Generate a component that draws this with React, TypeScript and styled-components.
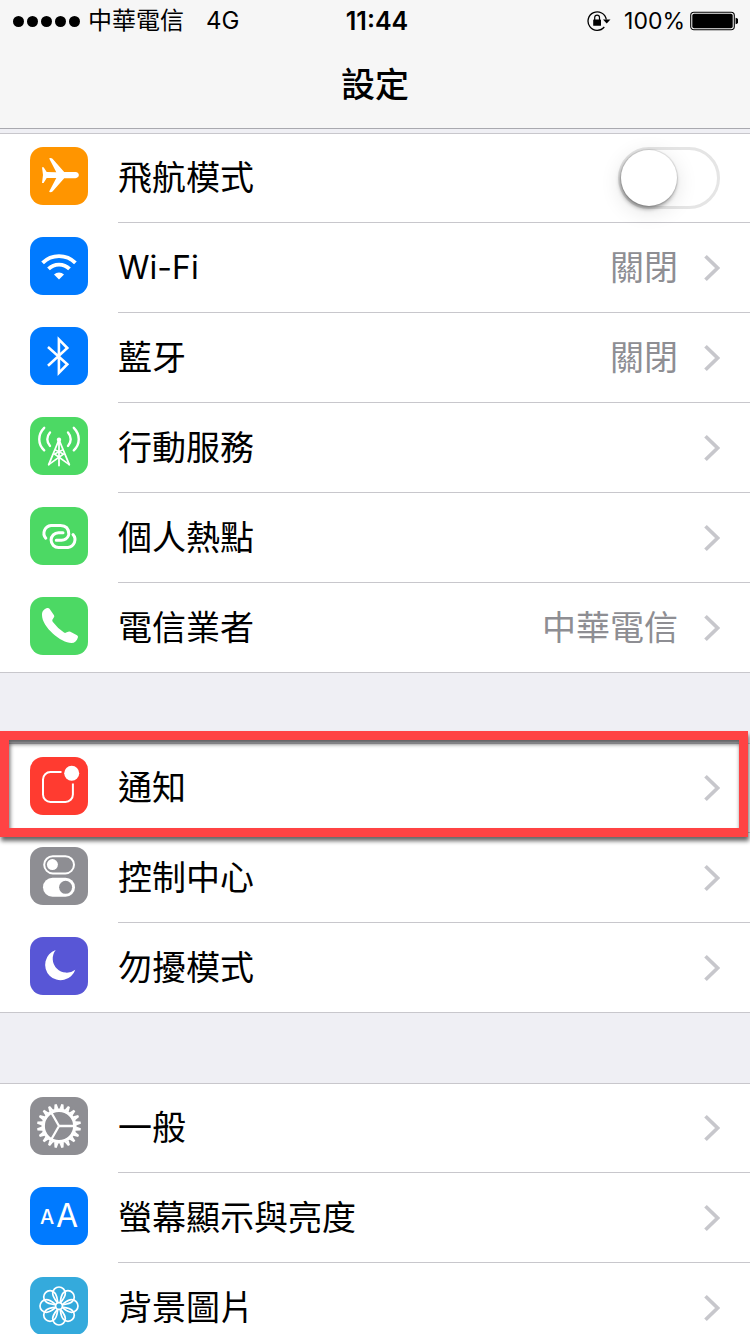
import React from "react";
import styled, { createGlobalStyle, css } from "styled-components";

const FONT = `Inter, "Noto Sans CJK TC", sans-serif`;

const GlobalStyle = createGlobalStyle`
  *, *::before, *::after { box-sizing: border-box; }
  body {
    margin: 0;
    background: #efeff4;
    font-family: ${FONT};
    color: #000;
  }
`;

const Screen = styled.div`
  display: flex;
  flex-direction: column;
  height: 100vh;
  overflow: hidden;
`;

const Header = styled.header`
  flex: none;
  background: #f6f6f6;
  border-bottom: 1px solid #a9a9af;
`;

const StatusBar = styled.div`
  display: grid;
  grid-template-columns: 1fr auto 1fr;
  align-items: center;
  height: 42px;
  padding: 0 12px 0 13px;
  font-size: 24px;
  line-height: 42px;
`;

const StatusSide = styled.div<{ $end?: boolean }>`
  display: flex;
  align-items: center;
  justify-content: ${(p) => (p.$end ? "flex-end" : "flex-start")};
  white-space: nowrap;
`;

const Signal = styled.div`
  display: flex;
  gap: 3px;
  margin-right: 8px;
`;

const SignalDot = styled.i`
  width: 11px;
  height: 11px;
  border-radius: 50%;
  background: #000;
`;

const Network = styled.span`
  margin-left: 22px;
`;

const Clock = styled.time`
  padding-left: 3px;
  font-size: 25px;
  font-weight: 600;
`;

const BatteryLevel = styled.span`
  margin: 0 5px 0 13px;
  font-size: 23px;
`;

const Title = styled.h1`
  margin: 0;
  height: 86px;
  font-size: 34px;
  line-height: 86px;
  font-weight: 500;
  text-align: center;
`;

const Content = styled.main`
  flex: 1;
  min-height: 0;
  padding-top: 4px;
  overflow-y: auto;
  scrollbar-width: none;
`;

const Group = styled.ul`
  margin: 0 0 70px;
  padding: 0;
  list-style: none;
  background: #fff;
  box-shadow: inset 0 1px #c8c7cc, inset 0 -1px #c8c7cc;
`;

const rowLayout = css`
  display: flex;
  align-items: center;
  height: 90px;
  padding-left: 30px;
  color: inherit;
  text-decoration: none;
`;

const RowLink = styled.a`
  ${rowLayout}
`;

const RowLabel = styled.label`
  ${rowLayout}
`;

const RowBody = styled.span`
  display: flex;
  flex: 1;
  align-items: center;
  height: 90px;
  padding-right: 30px;
  border-bottom: 1px solid #c8c7cc;
`;

const Item = styled.li`
  position: relative;

  &:last-child ${RowBody} {
    border-bottom-color: transparent;
  }
`;

const Tile = styled.span<{ $color: string }>`
  flex: none;
  width: 58px;
  height: 58px;
  margin: 0 30px 4px 0;
  border-radius: 13px;
  background: ${(p) => p.$color};
  overflow: hidden;

  svg {
    display: block;
  }
`;

const Name = styled.span<{ $latin?: boolean }>`
  flex: 1;
  font-size: ${(p) => (p.$latin ? 32 : 34)}px;
  line-height: 48px;
`;

const Value = styled.span`
  margin-right: 26px;
  font-size: 34px;
  line-height: 48px;
  color: #8e8e93;
`;

const Switch = styled.input`
  appearance: none;
  flex: none;
  width: 102px;
  height: 62px;
  margin: 0;
  border: 3px solid #e5e5e5;
  border-radius: 31px;
  background: #fff;

  &::before {
    content: "";
    display: block;
    width: 56px;
    height: 56px;
    border-radius: 50%;
    background: #fff;
    box-shadow: 0 0 1px 1px rgba(0, 0, 0, 0.1), -1px 3px 4px rgba(0, 0, 0, 0.35),
      0 5px 22px rgba(0, 0, 0, 0.12);
  }

  &:checked {
    border-color: #4cd964;
    background: #4cd964;
  }

  &:checked::before {
    margin-left: 40px;
  }
`;

const Highlight = styled.span`
  position: absolute;
  z-index: 1;
  inset: -12px 2px -4px 0;
  border: 9px solid #ff4344;
  filter: drop-shadow(1px 4px 2px rgba(0, 0, 0, 0.6));
  pointer-events: none;
`;

type DrawingProps = { children: React.ReactNode };

const Glyph = ({ children }: DrawingProps) => (
  <svg width="58" height="58" viewBox="0 0 58 58" fill="none" aria-hidden="true">
    {children}
  </svg>
);

const Chevron = () => (
  <svg width="16" height="28" viewBox="0 0 16 28" fill="none" aria-hidden="true">
    <path d="M1.5 2.2 13.6 14 1.5 25.8" stroke="#c7c7cc" strokeWidth="3.7" />
  </svg>
);

const Airplane = () => (
  <Glyph>
    <path
      fill="#fff"
      d="M12 20.2h1.6l3.1 4.9 9.6.1-7.1-13.6q0-.7 1.2-.7 1.4 0 2.1.8L34.2 25h11.3C50 25.4 50 30.8 45.5 31.2H34.2L22.5 44.5q-.7.8-2.1.8-1.2 0-1.2-.7L26.3 31l-9.6.1L13.6 36H12L13 28Z"
    />
  </Glyph>
);

const Wifi = () => (
  <Glyph>
    <path
      stroke="#fff"
      strokeWidth="3.8"
      d="M12.6 25.9A23.2 23.2 0 0 1 45.4 25.9M18.5 31.9A14.8 14.8 0 0 1 39.5 31.9"
    />
    <path fill="#fff" d="M29 42.6 24 37.5A7.1 7.1 0 0 1 34 37.5Z" />
  </Glyph>
);

const Bluetooth = () => (
  <Glyph>
    <path stroke="#fff" strokeWidth="2.6" d="M18 20 37.3 37.2 28.9 45.8V12.4L37.3 21 18 38.7" />
  </Glyph>
);

const Antenna = () => (
  <Glyph>
    <circle cx="29" cy="22.8" r="2.2" fill="#fff" />
    <g stroke="#fff" strokeLinecap="round">
      <path
        strokeWidth="2.4"
        d="M14.2 10.8C7.6 17.5 7.6 27 14.2 33.3M20 15.5C16.4 19.5 16.4 25.2 20 29M43.8 10.8C50.400 17.5 50.400 27 43.8 33.3M38 15.5C41.6 19.5 41.6 25.2 38 29"
      />
      <path strokeWidth="1.800" d="M29 23V48.5M28.5 24 18.7 47.6M29.5 24 39.3 47.6" />
      <path strokeWidth="1.6" d="M18.7 47.6 33.5 37 25.5 33M39.3 47.6 24.5 37 32.5 33" />
    </g>
  </Glyph>
);

const Hotspot = () => (
  <Glyph>
    <g stroke="#fff" strokeWidth="3" strokeLinecap="round">
      <path d="M15.8 31.200A7.800 7.800 0 0 1 21 18.4H30.500Q38.600 18.400 38.800 27" />
      <path d="M43 27.600A7.800 7.800 0 0 1 38 40.500H28.500A7.400 7.400 0 0 1 28.500 25.700H33" />
      <path d="M38.500 28.500Q36.500 33.200 31.500 33.200H26.300" />
    </g>
  </Glyph>
);

const Phone = () => (
  <Glyph>
    <path
      fill="#fff"
      d="M12 18C12 14 14 12.300 17 11.100Q18.600 10.500 19.500 11.800L24 18.200Q24.700 19.400 23.800 20.600L22.500 22.500Q21.900 23.600 22.700 24.700Q27.500 31.200 34 35.500Q35 36.200 36.100 35.600L38.200 34.700Q39.300 34.200 40.400 34.800L47 38.200Q48.400 39 47.900 40.500C47 44 44.600 46 41.500 46C31 46 12 30 12 18Z"
    />
  </Glyph>
);

const Notification = () => (
  <Glyph>
    <path
      stroke="#fff"
      strokeWidth="2"
      d="M31.500 15H20.500A7.500 7.500 0 0 0 13 22.500V37.400A7.500 7.500 0 0 0 20.500 44.900H35.400A7.500 7.500 0 0 0 42.900 37.400V26.500"
    />
    <circle cx="41.700" cy="16.300" r="7.500" fill="#fff" />
  </Glyph>
);

const Controls = () => (
  <Glyph>
    <rect x="14.200" y="9.200" width="29.800" height="17.200" rx="8.600" stroke="#fff" strokeWidth="2" />
    <circle cx="22.400" cy="17.600" r="5.500" fill="#fff" />
    <rect x="13" y="30.700" width="32" height="19" rx="9.500" fill="#fff" />
    <circle cx="35.600" cy="40.300" r="6.500" fill="#8e8e93" />
  </Glyph>
);

const Moon = () => (
  <Glyph>
    <path fill="#fff" d="M25.700 13A15.500 15.500 0 1 0 45.300 32.700A14 14 0 0 1 25.700 13Z" />
  </Glyph>
);

const TEETH = Array.from({ length: 20 }, (_, i) => i * 18 + 9);

const Gear = () => (
  <Glyph>
    <g transform="translate(29 29)">
      <circle r="15.800" stroke="#fff" strokeWidth="3.400" />
      {TEETH.map((angle) => (
        <path key={angle} transform={`rotate(${angle})`} fill="#fff" d="M-2.200-17-1.100-22H1.100L2.200-17Z" />
      ))}
      <path stroke="#fff" strokeWidth="2.300" d="M0 0H15M0 0-7.600-13.200M0 0-7.600 13.200" />
    </g>
  </Glyph>
);

const TextSize = () => (
  <Glyph>
    <g fill="#fff" fontFamily="Inter, sans-serif">
      <text x="10" y="37" fontSize="20" fontWeight="500">
        A
      </text>
      <text x="26" y="40" fontSize="32">
        A
      </text>
    </g>
  </Glyph>
);

const PETALS = [0, 45, 90, 135, 180, 225, 270, 315];

const Flower = () => (
  <Glyph>
    <g transform="translate(29 29)" stroke="#fff" strokeWidth="1.700">
      <circle r="3.400" />
      {PETALS.map((angle) => (
        <path
          key={angle}
          transform={`rotate(${angle})`}
          d="M-1.400-3.200C-4-6.500-6.300-9-6.300-12.700A6.300 6.300 0 0 1 6.300-12.700C6.300-9 4-6.500 1.400-3.200"
        />
      ))}
    </g>
  </Glyph>
);

const RotationLock = () => (
  <svg width="24" height="22" viewBox="0 0 24 22" fill="none" aria-hidden="true">
    <path stroke="#000" strokeWidth="1.300" d="M19.300 9.500A9.200 9.200 0 1 0 17.300 17" />
    <path fill="#000" d="M16 9.500H23.500L19.700 13.500Z" />
    <rect x="6.200" y="9.500" width="7.800" height="6.300" rx=".6" fill="#000" />
    <path stroke="#000" strokeWidth="1.200" d="M7.700 10V7.500A2.400 2.400 0 0 1 12.500 7.500V10" />
  </svg>
);

const Battery = () => (
  <svg width="48" height="20" viewBox="0 0 48 20" fill="none" aria-hidden="true">
    <rect x=".7" y="1.200" width="43.600" height="17.600" rx="3.200" stroke="#000" strokeWidth="1.100" />
    <rect x="2.300" y="2.800" width="40.400" height="14.400" rx="1.800" fill="#000" />
    <path fill="#000" d="M45.600 6.800Q48.600 7.500 48.600 10T45.600 13.200Z" />
  </svg>
);

type Setting = {
  id: string;
  name: string;
  latin?: boolean;
  color: string;
  icon: React.ReactNode;
  value?: string;
  toggle?: boolean;
  highlighted?: boolean;
};

const BLUE = "#007aff";
const GREEN = "#4cd964";
const GRAY = "#8e8e93";

const groups: Setting[][] = [
  [
    { id: "airplane", name: "飛航模式", color: "#ff9500", icon: <Airplane />, toggle: true },
    { id: "wifi", name: "Wi-Fi", latin: true, color: BLUE, icon: <Wifi />, value: "關閉" },
    { id: "bluetooth", name: "藍牙", color: BLUE, icon: <Bluetooth />, value: "關閉" },
    { id: "cellular", name: "行動服務", color: GREEN, icon: <Antenna /> },
    { id: "hotspot", name: "個人熱點", color: GREEN, icon: <Hotspot /> },
    { id: "carrier", name: "電信業者", color: GREEN, icon: <Phone />, value: "中華電信" },
  ],
  [
    { id: "notifications", name: "通知", color: "#ff3b30", icon: <Notification />, highlighted: true },
    { id: "control-center", name: "控制中心", color: GRAY, icon: <Controls /> },
    { id: "do-not-disturb", name: "勿擾模式", color: "#5856d6", icon: <Moon /> },
  ],
  [
    { id: "general", name: "一般", color: GRAY, icon: <Gear /> },
    { id: "display", name: "螢幕顯示與亮度", color: BLUE, icon: <TextSize /> },
    { id: "wallpaper", name: "背景圖片", color: "#34aadc", icon: <Flower /> },
  ],
];

const SettingRow = ({ setting }: { setting: Setting }) => {
  const tile = <Tile $color={setting.color}>{setting.icon}</Tile>;
  const name = <Name $latin={setting.latin}>{setting.name}</Name>;
  return (
    <Item>
      {setting.toggle ? (
        <RowLabel htmlFor={setting.id}>
          {tile}
          <RowBody>
            {name}
            <Switch id={setting.id} type="checkbox" role="switch" />
          </RowBody>
        </RowLabel>
      ) : (
        <RowLink href={`#${setting.id}`}>
          {tile}
          <RowBody>
            {name}
            {setting.value && <Value>{setting.value}</Value>}
            <Chevron />
          </RowBody>
        </RowLink>
      )}
      {setting.highlighted && <Highlight />}
    </Item>
  );
};

export default function App() {
  return (
    <Screen lang="zh-Hant">
      <GlobalStyle />
      <Header>
        <StatusBar>
          <StatusSide>
            <Signal>
              {[0, 1, 2, 3, 4].map((n) => (
                <SignalDot key={n} />
              ))}
            </Signal>
            <span>中華電信</span>
            <Network>4G</Network>
          </StatusSide>
          <Clock>11:44</Clock>
          <StatusSide $end>
            <RotationLock />
            <BatteryLevel>100%</BatteryLevel>
            <Battery />
          </StatusSide>
        </StatusBar>
        <Title>設定</Title>
      </Header>
      <Content>
        {groups.map((group, i) => (
          <Group key={i}>
            {group.map((setting) => (
              <SettingRow key={setting.id} setting={setting} />
            ))}
          </Group>
        ))}
      </Content>
    </Screen>
  );
}
